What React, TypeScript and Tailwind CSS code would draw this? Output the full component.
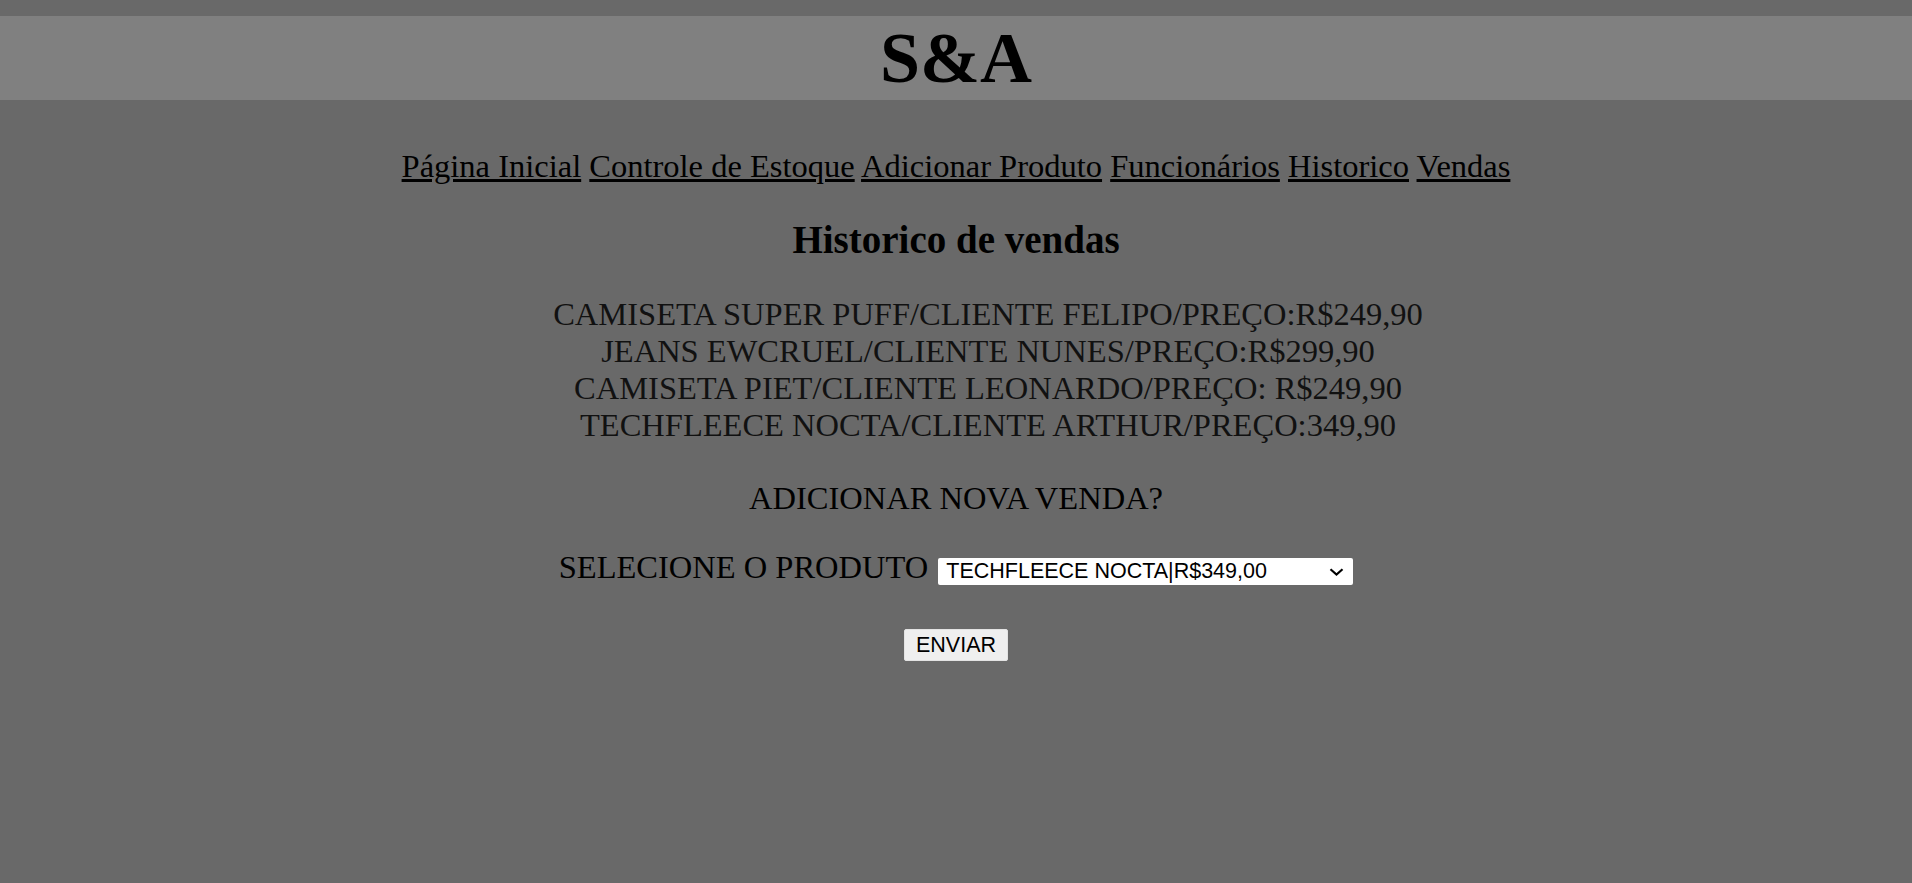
import { useState } from 'react';

const navLinks = [
  { name: 'Página Inicial', href: '#inicio' },
  { name: 'Controle de Estoque', href: '#estoque' },
  { name: 'Adicionar Produto', href: '#produto' },
  { name: 'Funcionários', href: '#funcionarios' },
  { name: 'Historico', href: '#historico' },
  { name: 'Vendas', href: '#vendas' },
];

const vendas = [
  'CAMISETA SUPER PUFF/CLIENTE FELIPO/PREÇO:R$249,90',
  'JEANS EWCRUEL/CLIENTE NUNES/PREÇO:R$299,90',
  'CAMISETA PIET/CLIENTE LEONARDO/PREÇO: R$249,90',
  'TECHFLEECE NOCTA/CLIENTE ARTHUR/PREÇO:349,90',
];

const produtos = [
  'TECHFLEECE NOCTA|R$349,00',
  'CAMISETA SUPER PUFF|R$249,90',
  'JEANS EWCRUEL|R$299,90',
  'CAMISETA PIET|R$249,90',
];

export default function App() {
  const [produto, setProduto] = useState(produtos[0]);

  return (
    <div className="min-h-[883px] bg-[#696969] pt-4 leading-[normal] text-black font-['Liberation_Serif',serif]">
      {/* Header */}
      <header className="flex h-[84px] items-center justify-center bg-[#808080]">
        <h1 className="text-[72px] font-bold leading-none">S&amp;A</h1>
      </header>

      {/* Nav */}
      <nav className="mt-12 text-center text-[32.5px]">
        {navLinks.map((link, i) => (
          <span key={link.name}>
            <a href={link.href} className="underline">
              {link.name}
            </a>
            {i < navLinks.length - 1 && ' '}
          </span>
        ))}
      </nav>

      <h2 className="mt-8 text-center text-[39px] font-bold">Historico de vendas</h2>

      {/* Lista de vendas */}
      <ul className="mt-[34px] pl-16 text-center text-[32.5px] text-[#111]">
        {vendas.map((v) => (
          <li key={v}>{v}</li>
        ))}
      </ul>

      <p className="mt-9 text-center text-[32.5px]">ADICIONAR NOVA VENDA?</p>

      {/* Form */}
      <form className="flex flex-col items-center" onSubmit={(e) => e.preventDefault()}>
        <div className="mt-[32px] flex items-baseline justify-center text-[32.5px]">
          <span>SELECIONE O PRODUTO</span>
          <div className="relative ml-[10px]">
            <select
              value={produto}
              onChange={(e) => setProduto(e.target.value)}
              className="block h-[27px] w-[415px] appearance-none rounded-[2px] bg-white py-0 pl-2 pr-8 text-[21.5px] text-black font-['Liberation_Sans',Arial,sans-serif] outline-none"
            >
              {produtos.map((p) => (
                <option key={p}>{p}</option>
              ))}
            </select>
            <svg
              className="pointer-events-none absolute top-[10px] right-[9px]"
              width="15"
              height="8"
              viewBox="0 0 15 8"
              fill="none"
            >
              <path d="M1.5 1.2 7.5 6.5 13.5 1.2" stroke="#000" strokeWidth="2.2" />
            </svg>
          </div>
        </div>

        <button
          type="submit"
          className="mt-[43px] h-8 w-[104px] rounded-[2px] border border-[#e3e3e3] bg-[#efefef] text-[21.5px] text-black font-['Liberation_Sans',Arial,sans-serif]"
        >
          ENVIAR
        </button>
      </form>
    </div>
  );
}
